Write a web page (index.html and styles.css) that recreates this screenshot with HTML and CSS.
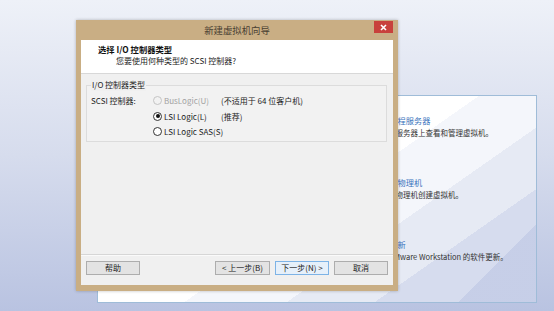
FILE: index.html
```html
<!DOCTYPE html>
<html lang="zh-CN">
<head>
    <meta charset="UTF-8">
    <title>新建虚拟机向导</title>
    <link rel="stylesheet" href="styles.css">
</head>
<body>
    <div class="desktop">
        <!-- home page behind the wizard -->
        <div class="home-window">
            <div class="home-list">
                <div class="home-item">
                    <div class="home-head">连接远程服务器</div>
                    <div class="home-desc">在远程服务器上查看和管理虚拟机。</div>
                </div>
                <div class="home-item">
                    <div class="home-head">虚拟化物理机</div>
                    <div class="home-desc">从一台物理机创建虚拟机。</div>
                </div>
                <div class="home-item">
                    <div class="home-head">软件更新</div>
                    <div class="home-desc">检查 VMware Workstation 的软件更新。</div>
                </div>
            </div>
        </div>

        <!-- wizard dialog -->
        <div class="dialog">
            <div class="titlebar">
                新建虚拟机向导
                <span class="close">
                    <svg width="7" height="7" viewBox="0 0 7 7"><path d="M1 1L6 6M6 1L1 6" stroke="#fff" stroke-width="1.6"/></svg>
                </span>
            </div>
            <div class="header">
                <div class="header-title">选择 I/O 控制器类型</div>
                <div class="header-sub">您要使用何种类型的 SCSI 控制器?</div>
            </div>
            <div class="body">
                <div class="group">
                    <span class="group-label">I/O 控制器类型</span>
                    <div class="grid">
                        <span class="field-label">SCSI 控制器:</span>
                        <span class="radio disabled"><span class="dot"></span>BusLogic(U)</span>
                        <span class="note">(不适用于 64 位客户机)</span>

                        <span></span>
                        <span class="radio checked"><span class="dot"></span>LSI Logic(L)</span>
                        <span class="note">(推荐)</span>

                        <span></span>
                        <span class="radio"><span class="dot"></span>LSI Logic SAS(S)</span>
                        <span></span>
                    </div>
                </div>
            </div>
            <div class="footer">
                <button class="btn help">帮助</button>
                <button class="btn back">&lt; 上一步(B)</button>
                <button class="btn primary">下一步(N) &gt;</button>
                <button class="btn">取消</button>
            </div>
        </div>
    </div>
</body>
</html>
```

FILE: styles.css
```css
body {
    margin: 0;
    font-family: "Noto Sans CJK SC", sans-serif;
    color: #222;
}
.desktop {
    position: relative;
    width: 554px;
    height: 311px;
    overflow: hidden;
    background: linear-gradient(to bottom, #eef1f8 0%, #d6dced 50%, #b9c3e1 100%);
}

/* background window */
.home-window {
    position: absolute;
    left: 97px;
    top: 95px;
    width: 440px;
    height: 208px;
    box-sizing: border-box;
    border: 1px solid #9fbcd8;
    background:
        linear-gradient(135deg, transparent 0%, transparent 88%, rgba(170, 182, 220, 0.35) 88%),
        linear-gradient(145deg, #ffffff 0%, #ffffff 52%, #f4f6fb 52%, #f4f6fb 66%, #e6eaf4 66%, #e6eaf4 78%, #d6dcee 78%, #d6dcee 100%);
}
.home-list {
    padding: 18px 0 0 275px;
}
.home-item {
    margin-bottom: 37px;
    white-space: nowrap;
}
.home-head {
    font-size: 8.2px;
    line-height: 12px;
    color: #3b74bd;
}
.home-desc {
    margin-top: 1px;
    font-size: 7.5px;
    line-height: 12px;
    color: #333;
}

/* dialog */
.dialog {
    position: absolute;
    left: 76px;
    top: 20px;
    width: 322px;
    height: 271px;
    box-sizing: border-box;
    padding: 0 5px 6px 5px;
    background: #c9ae84;
    display: flex;
    flex-direction: column;
    box-shadow: 0 0 3px rgba(0, 0, 0, 0.25);
}
.titlebar {
    position: relative;
    height: 20px;
    line-height: 20px;
    text-align: center;
    font-size: 9.4px;
    color: #4a4032;
}
.close {
    position: absolute;
    right: 0;
    top: 1px;
    width: 19px;
    height: 12px;
    background: #c8413c;
    display: flex;
    align-items: center;
    justify-content: center;
}
.header {
    height: 33px;
    background: #fff;
    padding-left: 17px;
    border-bottom: 1px solid #d8d8d8;
}
.header-title {
    padding-top: 3px;
    font-size: 8.3px;
    line-height: 12px;
    font-weight: bold;
    color: #111;
}
.header-sub {
    padding-left: 18px;
    font-size: 8px;
    line-height: 12px;
    color: #222;
}
.body {
    flex: 1;
    background: #f0f0f0;
    padding: 11px 6px 0 5px;
}
.group {
    position: relative;
    height: 55px;
    border: 1px solid #dcdcdc;
    background: #f2f2f2;
}
.group-label {
    position: absolute;
    left: 4px;
    top: -7px;
    padding: 0 1px;
    background: #f0f0f0;
    font-size: 8px;
    line-height: 12px;
    color: #222;
}
.grid {
    display: grid;
    grid-template-columns: 62px 68px auto;
    grid-auto-rows: 15.5px;
    padding: 7px 0 0 4px;
    font-size: 8px;
    color: #222;
    align-items: center;
}
.radio {
    display: flex;
    align-items: center;
    gap: 2px;
    white-space: nowrap;
}
.dot {
    flex-shrink: 0;
    width: 9px;
    height: 9px;
    box-sizing: border-box;
    border: 1px solid #333;
    border-radius: 50%;
    background: #fff;
    display: flex;
    align-items: center;
    justify-content: center;
}
.checked .dot::after {
    content: "";
    width: 4px;
    height: 4px;
    border-radius: 50%;
    background: #111;
}
.disabled {
    color: #a2a2a2;
}
.disabled .dot {
    border-color: #c4c4c4;
    background: #f2f2f2;
}
.note {
    white-space: nowrap;
}
.footer {
    height: 24px;
    background: #f0f0f0;
    border-top: 1px solid #d6d6d6;
    box-shadow: inset 0 1px 0 #fafafa;
    display: flex;
    align-items: flex-start;
    gap: 5px;
    padding: 6px 5px 0 5px;
}
.btn {
    width: 54px;
    height: 14px;
    padding: 0;
    border: 1px solid #adadad;
    background: #e3e3e3;
    font-family: "Noto Sans CJK SC", sans-serif;
    font-size: 8px;
    line-height: 12px;
    color: #222;
}
.help {
    margin-right: auto;
}
.back {
    width: 55px;
}
.primary {
    border-color: #7db3e6;
    background: #e6f0fa;
}
```
